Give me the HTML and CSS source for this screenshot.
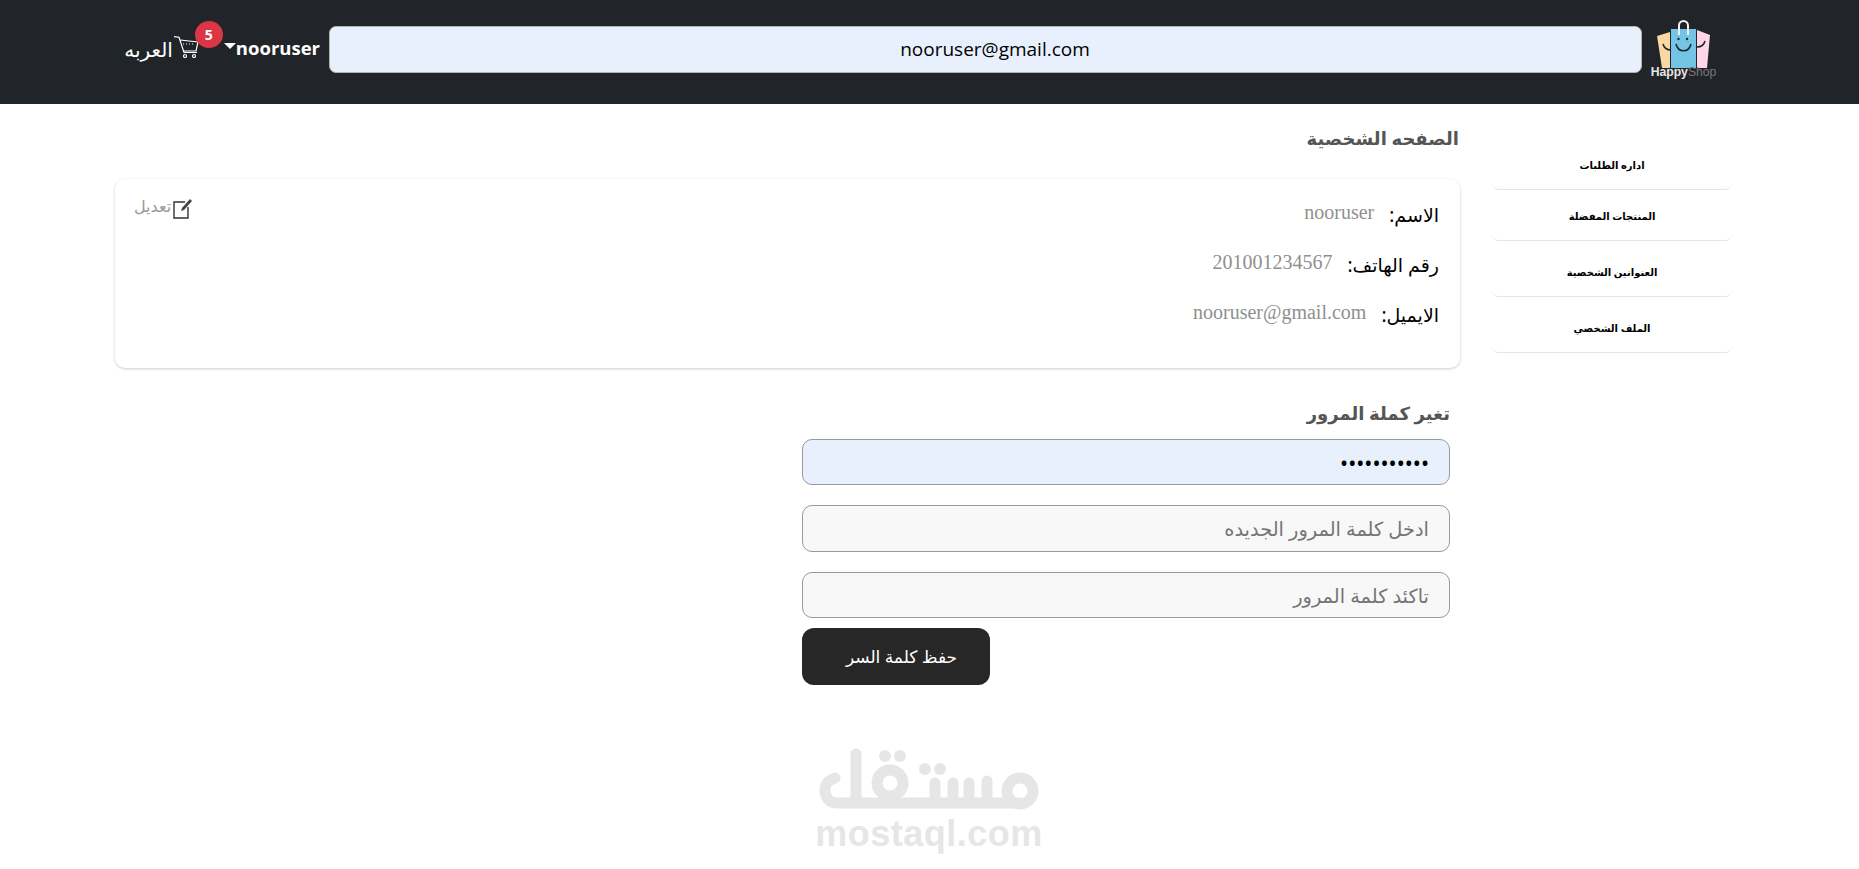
FILE: index.html
```html
<!DOCTYPE html>
<html lang="ar" dir="rtl">
<head>
<meta charset="utf-8">
<title>الصفحه الشخصية</title>
<link rel="stylesheet" href="styles.css">
</head>
<body>
<header class="topbar">
  <div class="brand">
    <svg class="brand-bags" viewBox="0 0 63 48" width="63" height="48" aria-hidden="true">
      <path class="bag-handle" d="M27 11V5.500a4.500 4.500 0 0 1 9 0V11"/>
      <path class="bag-orange" d="M5 16l13-4v36H10z"/>
      <path class="bag-pink" d="M45 10l13 5-3 33H45z"/>
      <rect class="bag-blue" x="19" y="9" width="25" height="39"/>
      <path class="bag-face" d="M24 24c2 9 13 9 15 0M11 24c1 4 4 6 8 6M45 27c4 0 7-2 8-6"/>
      <circle class="bag-eye" cx="26.500" cy="19" r="1.200"/>
      <circle class="bag-eye" cx="35" cy="19" r="1.200"/>
      <path class="bag-handle" d="M27 6v9M36 6v9"/>
    </svg>
    <div class="brand-name" dir="ltr"><b>Happy</b><span>Shop</span></div>
  </div>
  <input class="search" type="text" value="nooruser@gmail.com" dir="ltr">
  <div class="user" dir="ltr"><span class="caret"></span><b>nooruser</b></div>
  <div class="cart">
    <svg viewBox="0 0 25 22" width="25" height="22" aria-hidden="true">
      <path d="M0 .7l5 .5 5 15.300h13"/>
      <path d="M6 4l18 2-2 9H10"/>
      <path class="cart-dots" d="M9 8h12"/>
      <circle cx="11" cy="20" r="1.500"/>
      <circle cx="20" cy="20" r="1.500"/>
    </svg>
    <span class="badge">5</span>
  </div>
  <a class="lang">العربه</a>
</header>

<div class="page">
  <aside class="sidebar">
    <a class="side-item">اداره الطلبات</a>
    <a class="side-item">المنتجات المفضلة</a>
    <a class="side-item">العنوانين الشخصية</a>
    <a class="side-item">الملف الشخصي</a>
  </aside>

  <main class="content">
    <h2 class="title">الصفحه الشخصية</h2>
    <section class="card">
      <div class="rows">
        <div class="row"><span class="label">الاسم:</span><span class="value">nooruser</span></div>
        <div class="row"><span class="label">رقم الهاتف:</span><span class="value">201001234567</span></div>
        <div class="row"><span class="label">الايميل:</span><span class="value">nooruser@gmail.com</span></div>
      </div>
      <a class="edit">
        <svg viewBox="0 0 20 21" width="20" height="21" aria-hidden="true">
          <path class="edit-box" d="M12 4H1v16h14V9"/>
          <path class="edit-pen" d="M8 13l1-3 8-9 2 2-8 9z"/>
        </svg>
        <span>تعديل</span>
      </a>
    </section>

    <form class="password">
      <h2 class="subtitle">تغير كملة المرور</h2>
      <input class="field filled" type="password" value="12345678901">
      <input class="field tall" type="password" placeholder="ادخل كلمة المرور الجديده">
      <input class="field last" type="password" placeholder="تاكئد كلمة المرور">
      <button class="save" type="button">حفظ كلمة السر</button>
    </form>
  </main>
</div>

<div class="watermark">
  <svg viewBox="0 0 226 72" width="226" height="72" aria-hidden="true">
    <path d="M19 33C12 35 9 40 9 45c0 8 5 13 12 13H204M40 9V58M119 38V58M137 38V58M153 38V58M171 36V58"/>
    <circle cx="74" cy="38" r="13"/>
    <circle cx="204" cy="46" r="13"/>
    <circle class="dot" cx="69" cy="11" r="6"/><circle class="dot" cx="84" cy="11" r="6"/>
    <circle class="dot" cx="109" cy="24" r="6"/><circle class="dot" cx="124" cy="24" r="6"/>
  </svg>
  <div class="watermark-text" dir="ltr">mostaql.com</div>
</div>
</body>
</html>
```

FILE: styles.css
```css
* { box-sizing: border-box; }
html, body { margin: 0; height: 100%; }
body { font-family: "Noto Sans", "DejaVu Sans", sans-serif; background: #fff; color: #000; overflow: hidden; position: relative; }

.topbar { height: 104px; background: #212529; display: flex; align-items: center; padding-right: 144px; color: #fff; }
.brand { width: 63px; margin-bottom: 6px; display: flex; flex-direction: column; align-items: center; }
.brand-bags { display: block; }
.bag-orange { fill: #f9d8a4; }
.bag-blue { fill: #74c4e6; }
.bag-pink { fill: #ffd6e8; }
.bag-handle { fill: none; stroke: #f2f2f2; stroke-width: 2; }
.bag-face { fill: none; stroke: #23272c; stroke-width: 1.6; }
.bag-eye { fill: #23272c; }
.brand-name { margin-top: -3px; font-family: "Liberation Sans", sans-serif; font-size: 12.200px; line-height: 14px; color: #e6e6e6; white-space: nowrap; }
.brand-name b { font-weight: 700; }
.brand-name span { color: #777; font-weight: 400; }

.search { width: 1313px; height: 47px; margin-right: 10px; margin-bottom: 6px; padding-left: 21px; border: 1px solid #b5b0ab; border-radius: 7px; background: #e8f0fe; color: #000; text-align: center; font-family: "Open Sans", sans-serif; font-size: 19px; outline: none; }
.user { display: flex; align-items: flex-start; margin-right: 9px; margin-bottom: 5px; font-family: "Open Sans", sans-serif; font-size: 18.500px; height: 28px; line-height: 24px; }
.user b { font-weight: 700; }
.caret { width: 0; height: 0; border: 6px solid transparent; border-top-color: #fff; border-bottom: 0; margin-top: 7px; }
.cart { position: relative; width: 25px; height: 22px; margin-right: 25px; margin-bottom: 11px; }
.cart svg { display: block; fill: none; stroke: #fff; stroke-width: 1.200; }
.cart-dots { stroke-dasharray: 1 2; }
.badge { position: absolute; top: -15px; left: 21px; width: 28px; height: 27px; border-radius: 50%; background: #dc3545; color: #fff; font-size: 14px; font-weight: 700; line-height: 27px; text-align: center; font-family: "Open Sans", sans-serif; }
.lang { margin-right: 1px; margin-bottom: 6px; font-size: 20px; color: #fff; }

.page { display: flex; }
.sidebar { width: 242px; margin-right: 126px; padding-top: 35px; display: flex; flex-direction: column; }
.side-item { height: 51px; padding-top: 1px; display: flex; align-items: center; justify-content: center; border-bottom: 1px solid #e4e4ea; border-radius: 0 0 8px 8px; font-size: 10px; font-weight: 700; color: #000; }
.side-item:nth-child(n+3) { margin-top: 5px; }

.content { width: 1345px; margin-right: 31px; }
.title { margin: 20px 1px 0 0; height: 55px; font-size: 18px; line-height: 28px; font-weight: 700; color: #555; }
.card { height: 189px; display: flex; justify-content: space-between; padding: 11px 21px 0 19px; border-radius: 10px; box-shadow: 0 1px 3px rgba(0,0,0,.2); }
.row { height: 50px; display: flex; align-items: center; gap: 15px; }
.label { font-size: 19px; color: #000; }
.value { font-family: "Liberation Serif", serif; font-size: 20px; color: #8f8f8f; margin-top: -5px; }
.edit { display: flex; align-items: flex-start; gap: 2px; color: #999; font-size: 16px; height: 24px; margin-top: 8px; line-height: 17px; }
.edit svg { display: block; fill: none; }
.edit-box { stroke: #333; stroke-width: 1.400; }
.edit-pen { fill: #444; }

.password { width: 648px; margin-right: 10px; display: flex; flex-direction: column; padding-top: 31px; }
.subtitle { margin: 0; height: 40px; font-size: 18px; line-height: 28px; font-weight: 700; color: #555; }
.field { width: 100%; height: 46px; margin-bottom: 20px; padding: 0 20px; border: 1px solid #999; border-radius: 10px; background: #f8f8f8; font-family: inherit; font-size: 19.400px; color: #000; outline: none; }
.field::placeholder { color: #757575; }
.field.filled { background: #e8f0fe; font-size: 21.500px; }
.field.tall { height: 47px; }
.field.last { margin-bottom: 10px; }
.save { align-self: flex-end; width: 188px; height: 57px; padding: 0 0 0 11px; border: 0; border-radius: 12px; background: #272727; color: #fff; font-family: inherit; font-size: 17px; }

.watermark { position: absolute; left: 816px; top: 745px; width: 226px; display: flex; flex-direction: column; align-items: center; pointer-events: none; }
.watermark svg { display: block; fill: none; stroke: #e6e6e6; stroke-width: 11; stroke-linecap: round; stroke-linejoin: round; }
.watermark .dot { fill: #e6e6e6; stroke: none; }
.watermark-text { font-family: "Liberation Sans", sans-serif; font-weight: 700; font-size: 36px; line-height: 33px; color: #e6e6e6; letter-spacing: .5px; }
```
